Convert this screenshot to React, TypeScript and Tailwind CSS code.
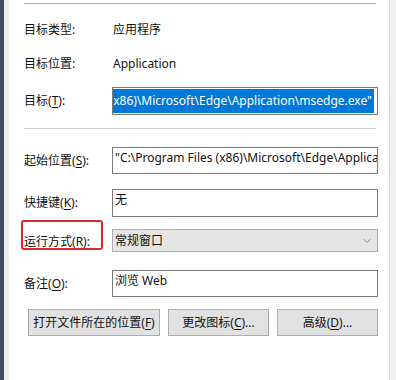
import { ChevronDown } from "lucide-react";

const font = { fontFamily: "'Noto Sans', 'Noto Sans CJK SC', sans-serif" };

function Label({ children, k }: { children: string; k?: string }) {
  return (
    <span className="whitespace-nowrap">
      {children}
      {k && (
        <>
          (<span className="underline underline-offset-2">{k}</span>)
        </>
      )}
      :
    </span>
  );
}

function Field({ label, k, value, h }: { label: string; k: string; value: string; h: string }) {
  return (
    <div className={`flex items-center ${h}`}>
      <div className="w-[88px] shrink-0">
        <Label k={k}>{label}</Label>
      </div>
      <div className="flex h-full min-w-0 flex-1 overflow-hidden border border-[#7a7a7a] bg-white pl-[2px] pt-[2px]">
        <span className="whitespace-nowrap leading-4">{value}</span>
      </div>
    </div>
  );
}

function Btn({ children, w }: { children: React.ReactNode; w: string }) {
  return (
    <button className={`flex h-[27px] shrink-0 items-center justify-center border border-[#adadad] bg-[#e1e1e1] ${w}`}>
      {children}
    </button>
  );
}

export default function App() {
  return (
    <div className="flex h-[380px] w-[396px] overflow-hidden bg-white text-[12px] text-[#111]" style={font}>
      <div className="w-[4px] shrink-0 bg-[#3e4d5f]" />
      <div className="w-[5px] shrink-0 bg-[#eeeeee]" />

      <div className="flex min-w-0 flex-1 flex-col pl-[15px] pr-[11px]">
        <div className="mr-[2px] mt-[3px] h-px bg-[#b0b0b0]" />

        <div className="mt-[14px] flex h-[24px] items-center">
          <div className="w-[88px] shrink-0">
            <Label>目标类型</Label>
          </div>
          <span className="pl-px">应用程序</span>
        </div>

        <div className="mt-[10px] flex h-[24px] items-center">
          <div className="w-[88px] shrink-0">
            <Label>目标位置</Label>
          </div>
          <span className="pl-px">Application</span>
        </div>

        <div className="mt-[11px] flex h-[28px] items-center">
          <div className="w-[88px] shrink-0">
            <Label k="T">目标</Label>
          </div>
          <div className="flex h-full min-w-0 flex-1 justify-end overflow-hidden border border-[#7a7a7a] bg-white p-px pr-[3px]">
            <span className="flex h-full shrink-0 items-center whitespace-nowrap bg-[#0078d7] pr-[2px] text-white">
              (x86)\Microsoft\Edge\Application\msedge.exe"
            </span>
          </div>
        </div>

        <div className="mr-[2px] mt-[13px] h-px bg-[#d0d0d0]" />

        <div className="mt-[18px]">
          <Field label="起始位置" k="S" value={'"C:\\Program Files (x86)\\Microsoft\\Edge\\Application"'} h="h-[27px]" />
        </div>
        <div className="mt-[15px]">
          <Field label="快捷键" k="K" value="无" h="h-[28px]" />
        </div>

        <div className="mt-[12px] flex h-[23px] items-center">
          <div className="relative w-[88px] shrink-0 pt-[2px]">
            <Label k="R">运行方式</Label>
            <div className="absolute -left-[3px] -top-[11px] h-[30px] w-[82px] rounded-[3px] border-2 border-[#e0262b]" />
          </div>
          <div className="flex h-full min-w-0 flex-1 items-center justify-between border border-[#adadad] bg-[#e5e5e5] pl-[2px] pr-[4px]">
            <span>常规窗口</span>
            <ChevronDown size={12} strokeWidth={1.5} className="text-[#666]" />
          </div>
        </div>

        <div className="mt-[18px]">
          <Field label="备注" k="O" value="浏览 Web" h="h-[27px]" />
        </div>

        <div className="mt-[12px] flex gap-[8px] pl-[4px]">
          <Btn w="w-[132px]">
            打开文件所在的位置(<span className="underline underline-offset-2">F</span>)
          </Btn>
          <Btn w="w-[101px]">
            更改图标(<span className="underline underline-offset-2">C</span>)...
          </Btn>
          <Btn w="w-[101px]">
            高级(<span className="underline underline-offset-2">D</span>)...
          </Btn>
        </div>
      </div>

      <div className="w-px shrink-0 bg-[#dadada]" />
      <div className="w-[6px] shrink-0 bg-[#f0f0f0]" />
    </div>
  );
}
